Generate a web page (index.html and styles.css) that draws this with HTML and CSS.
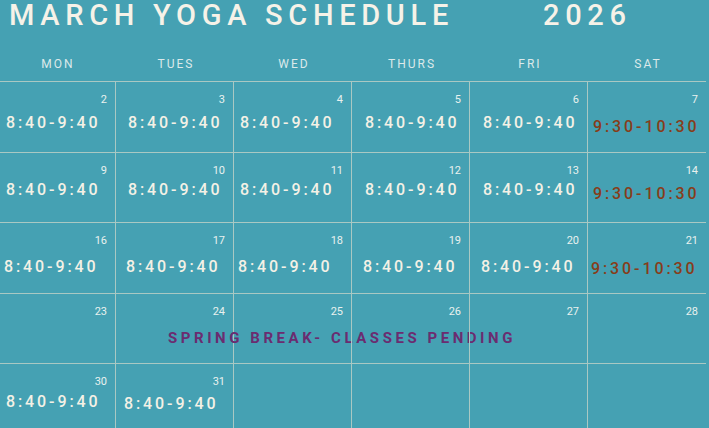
FILE: index.html
```html
<!DOCTYPE html>
<html lang="en">
<head>
<meta charset="utf-8">
<title>March Yoga Schedule 2026</title>
<link rel="stylesheet" href="styles.css">
</head>
<body>
<main class="page">
  <h1 class="title">MARCH YOGA SCHEDULE<span class="year">2026</span></h1>
  <section class="days">
    <span>MON</span><span>TUES</span><span>WED</span><span>THURS</span><span>FRI</span><span>SAT</span>
  </section>
  <section class="calendar">
    <div class="cell"><span class="num">2</span><span class="time">8:40-9:40</span></div>
    <div class="cell"><span class="num">3</span><span class="time">8:40-9:40</span></div>
    <div class="cell"><span class="num">4</span><span class="time">8:40-9:40</span></div>
    <div class="cell"><span class="num">5</span><span class="time">8:40-9:40</span></div>
    <div class="cell"><span class="num">6</span><span class="time">8:40-9:40</span></div>
    <div class="cell"><span class="num">7</span><span class="time sat">9:30-10:30</span></div>

    <div class="cell"><span class="num">9</span><span class="time">8:40-9:40</span></div>
    <div class="cell"><span class="num">10</span><span class="time">8:40-9:40</span></div>
    <div class="cell"><span class="num">11</span><span class="time">8:40-9:40</span></div>
    <div class="cell"><span class="num">12</span><span class="time">8:40-9:40</span></div>
    <div class="cell"><span class="num">13</span><span class="time">8:40-9:40</span></div>
    <div class="cell"><span class="num">14</span><span class="time sat">9:30-10:30</span></div>

    <div class="cell"><span class="num">16</span><span class="time">8:40-9:40</span></div>
    <div class="cell"><span class="num">17</span><span class="time">8:40-9:40</span></div>
    <div class="cell"><span class="num">18</span><span class="time">8:40-9:40</span></div>
    <div class="cell"><span class="num">19</span><span class="time">8:40-9:40</span></div>
    <div class="cell"><span class="num">20</span><span class="time">8:40-9:40</span></div>
    <div class="cell"><span class="num">21</span><span class="time sat">9:30-10:30</span></div>

    <div class="cell"><span class="num">23</span></div>
    <div class="cell"><span class="num">24</span><span class="break">SPRING BREAK- CLASSES PENDING</span></div>
    <div class="cell"><span class="num">25</span></div>
    <div class="cell"><span class="num">26</span></div>
    <div class="cell"><span class="num">27</span></div>
    <div class="cell"><span class="num">28</span></div>

    <div class="cell"><span class="num">30</span><span class="time">8:40-9:40</span></div>
    <div class="cell"><span class="num">31</span><span class="time">8:40-9:40</span></div>
    <div class="cell"></div>
    <div class="cell"></div>
    <div class="cell"></div>
    <div class="cell"></div>
  </section>
</main>
</body>
</html>
```

FILE: styles.css
```css
* { box-sizing: border-box; }

html, body {
  margin: 0;
  padding: 0;
  height: 428px;
  overflow: hidden;
  background: #45a1b3;
}

.page {
  font-family: Roboto, "Liberation Sans", Arial, sans-serif;
  color: #f4f1e6;
}

.title {
  margin: 0;
  padding-left: 9px;
  font-size: 29px;
  line-height: 30px;
  font-weight: 500;
  letter-spacing: 5.7px;
  color: #f6f2e8;
  white-space: nowrap;
}

.year {
  margin-left: 89px;
}

.days {
  display: grid;
  grid-template-columns: repeat(6, 118px);
  margin-left: -2px;
  padding-top: 27px;
  padding-bottom: 10px;
  font-size: 12px;
  line-height: 14px;
  letter-spacing: 2px;
  color: #dce9ea;
}

.days span {
  text-align: center;
  padding-left: 2px;
}

.calendar {
  display: grid;
  grid-template-columns: repeat(6, 118px);
  grid-template-rows: 71px 70px 71px 70px 71px;
  width: 708px;
  margin-left: -2px;
  border-top: 1px solid #a9c8c3;
}

.cell {
  display: flex;
  flex-direction: column;
  min-width: 0;
  border-right: 1px solid #a9c8c3;
  border-bottom: 1px solid #a9c8c3;
  padding-top: 11px;
}

.cell:nth-of-type(6n) {
  border-right: none;
}

.num {
  align-self: flex-end;
  padding-right: 8px;
  font-size: 11px;
  line-height: 13px;
  color: #e9f1ef;
}

.time {
  margin-top: 7px;
  font-size: 16px;
  line-height: 20px;
  font-weight: 500;
  letter-spacing: 2.9px;
  color: #f4f1e6;
  white-space: nowrap;
}

.time.sat {
  margin-top: 11px;
  letter-spacing: 2.9px;
  color: #873d1a;
}

/* column offsets */
.cell:nth-of-type(6n+1) .time { padding-left: 8px; }
.cell:nth-of-type(6n+2) .time { padding-left: 12px; }
.cell:nth-of-type(6n+3) .time { padding-left: 6px; }
.cell:nth-of-type(6n+4) .time { padding-left: 13px; }
.cell:nth-of-type(6n+5) .time { padding-left: 13px; }
.cell:nth-of-type(6n) .time { padding-left: 5px; }

/* row 2 */
.cell:nth-of-type(n+7):nth-of-type(-n+12) .time { margin-top: 3px; }
.cell:nth-of-type(n+7):nth-of-type(-n+12) .time.sat { margin-top: 7px; }

/* row 3 */
.cell:nth-of-type(n+13):nth-of-type(-n+18) .time { margin-top: 10px; margin-left: -2px; }
.cell:nth-of-type(n+13):nth-of-type(-n+18) .time.sat { margin-top: 12px; }

/* row 5 */
.cell:nth-of-type(n+25) .time { margin-top: 4px; }
.cell:nth-of-type(26) .time { margin-top: 6px; padding-left: 8px; }

.break {
  margin-top: 11px;
  padding-left: 52px;
  font-size: 15px;
  line-height: 18px;
  font-weight: 700;
  letter-spacing: 3.55px;
  color: #6b2c70;
  white-space: nowrap;
}
```
